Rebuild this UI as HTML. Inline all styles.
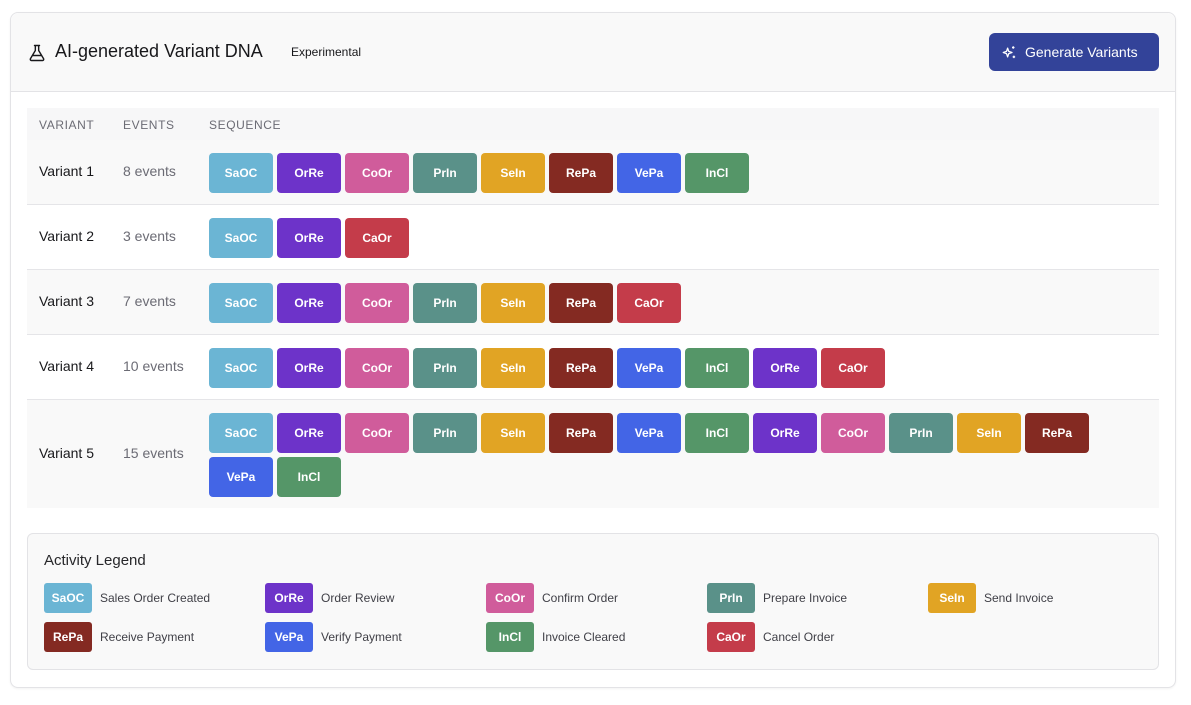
<!DOCTYPE html>
<html><head><meta charset="utf-8"><style>
*{box-sizing:border-box;margin:0;padding:0}
body{width:1191px;height:705px;background:#fff;font-family:"Liberation Sans",sans-serif;position:relative;overflow:hidden}
.card{position:absolute;left:10px;top:12px;width:1166px;height:676px;border:1px solid #e3e3e6;border-radius:8px;background:#fff;box-shadow:0 1px 2px rgba(0,0,0,.05)}
.hdr{position:absolute;left:0;top:0;width:100%;height:79px;background:#f9f9f9;border-bottom:1px solid #e3e3e6;border-radius:8px 8px 0 0}
.title{position:absolute;left:44px;top:28px;font-size:18px;color:#18181b}
.exp{position:absolute;left:280px;top:32px;font-size:12px;color:#18181b}
.btn{position:absolute;left:978px;top:20px;width:170px;height:38px;background:#334399;border-radius:6px;color:#fff;font-size:14px;line-height:38px;padding-left:36px}
.abs{position:absolute}
.th{position:absolute;top:108px;left:27px;width:1132px;height:33px;background:#f7f7f8;border-bottom:1px solid #e5e5e8}
.th span{position:absolute;top:10px;font-size:12px;color:#6b6b74;letter-spacing:.6px}
.row{position:absolute;left:27px;width:1132px;border-bottom:1px solid #e5e5e8}
.row .v{position:absolute;left:12px;font-size:14px;color:#18181b}
.row .e{position:absolute;left:96px;font-size:14px;color:#6b6b74}
.c{position:absolute;width:64px;height:40px;border-radius:4px;color:#fff;font-weight:bold;font-size:12px;text-align:center;line-height:40px}
.lg{position:absolute;left:27px;top:533px;width:1132px;height:137px;background:#f9f9f9;border:1px solid #e3e3e6;border-radius:6px}
.lc{position:absolute;width:48px;height:30px;border-radius:3px;color:#fff;font-weight:bold;font-size:12px;text-align:center;line-height:30px}
.lt{position:absolute;font-size:12px;color:#3f3f46}
</style></head><body>
<div class="card">
<div class="hdr">
<svg class="abs" style="left:16px;top:30px" width="20" height="20" viewBox="0 0 24 24" fill="none" stroke="#18181b" stroke-width="1.7" stroke-linecap="round" stroke-linejoin="round"><path d="M9 3h6M10 3v6L4 19a1.5 1.5 0 0 0 1.3 2h13.4a1.5 1.5 0 0 0 1.3-2L14 9V3M6.5 15h11"/></svg>
<div class="title" style="left:44px;top:28px">AI-generated Variant DNA</div>
<div class="exp">Experimental</div>
<div class="btn"><svg class="abs" style="left:13px;top:12px" width="15" height="15" viewBox="0 0 24 24" fill="none" stroke="#fff" stroke-width="2" stroke-linejoin="round"><path d="M9 5l1.8 5.2L16 12l-5.2 1.8L9 19l-1.8-5.2L2 12l5.2-1.8z"/><path d="M18 2v4M16 4h4M19 17v4M17 19h4"/></svg>Generate Variants</div>
</div>
</div>
<div class="th"><span style="left:12px">VARIANT</span><span style="left:96px">EVENTS</span><span style="left:182px">SEQUENCE</span></div>
<div id="rows"></div>
<div class="lg">
<div class="abs" style="left:16px;top:18px;font-size:15px;color:#27272a">Activity Legend</div>
</div>
<script>
var C={SaOC:"#6bb5d4",OrRe:"#6d33c9",CoOr:"#d05c9b",PrIn:"#5a9189",SeIn:"#e1a424",RePa:"#842a22",VePa:"#4365e6",InCl:"#559668",CaOr:"#c43c4a"};
var rows=[
["Variant 1","8 events",140,65,"#f9f9f9",["SaOC","OrRe","CoOr","PrIn","SeIn","RePa","VePa","InCl"]],
["Variant 2","3 events",205,65,"#fff",["SaOC","OrRe","CaOr"]],
["Variant 3","7 events",270,65,"#f9f9f9",["SaOC","OrRe","CoOr","PrIn","SeIn","RePa","CaOr"]],
["Variant 4","10 events",335,65,"#fff",["SaOC","OrRe","CoOr","PrIn","SeIn","RePa","VePa","InCl","OrRe","CaOr"]],
["Variant 5","15 events",400,108,"#f9f9f9",["SaOC","OrRe","CoOr","PrIn","SeIn","RePa","VePa","InCl","OrRe","CoOr","PrIn","SeIn","RePa","VePa","InCl"]]];
var h="";
rows.forEach(function(r,i){
var ty=(r[3]-17)/2;
h+='<div class="row" style="top:'+r[2]+'px;height:'+r[3]+'px;background:'+r[4]+(i==4?';border-bottom:none':'')+'"><div class="v" style="top:'+(ty-1)+'px">'+r[0]+'</div><div class="e" style="top:'+(ty-1)+'px">'+r[1]+'</div>';
r[5].forEach(function(k,j){var col=j%13,ln=Math.floor(j/13);h+='<div class="c" style="left:'+(182+col*68)+'px;top:'+(13+ln*44)+'px;background:'+C[k]+'">'+k+'</div>';});
h+='</div>';});
document.getElementById("rows").innerHTML=h;
var L=[["SaOC","Sales Order Created"],["OrRe","Order Review"],["CoOr","Confirm Order"],["PrIn","Prepare Invoice"],["SeIn","Send Invoice"],["RePa","Receive Payment"],["VePa","Verify Payment"],["InCl","Invoice Cleared"],["CaOr","Cancel Order"]];
var g="";
L.forEach(function(l,i){var x=16+(i%5)*221,y=49+Math.floor(i/5)*39;g+='<div class="lc" style="left:'+x+'px;top:'+y+'px;background:'+C[l[0]]+'">'+l[0]+'</div><div class="lt" style="left:'+(x+56)+'px;top:'+(y+8)+'px">'+l[1]+'</div>';});
document.querySelector(".lg").insertAdjacentHTML("beforeend",g);
</script>
</body></html>
